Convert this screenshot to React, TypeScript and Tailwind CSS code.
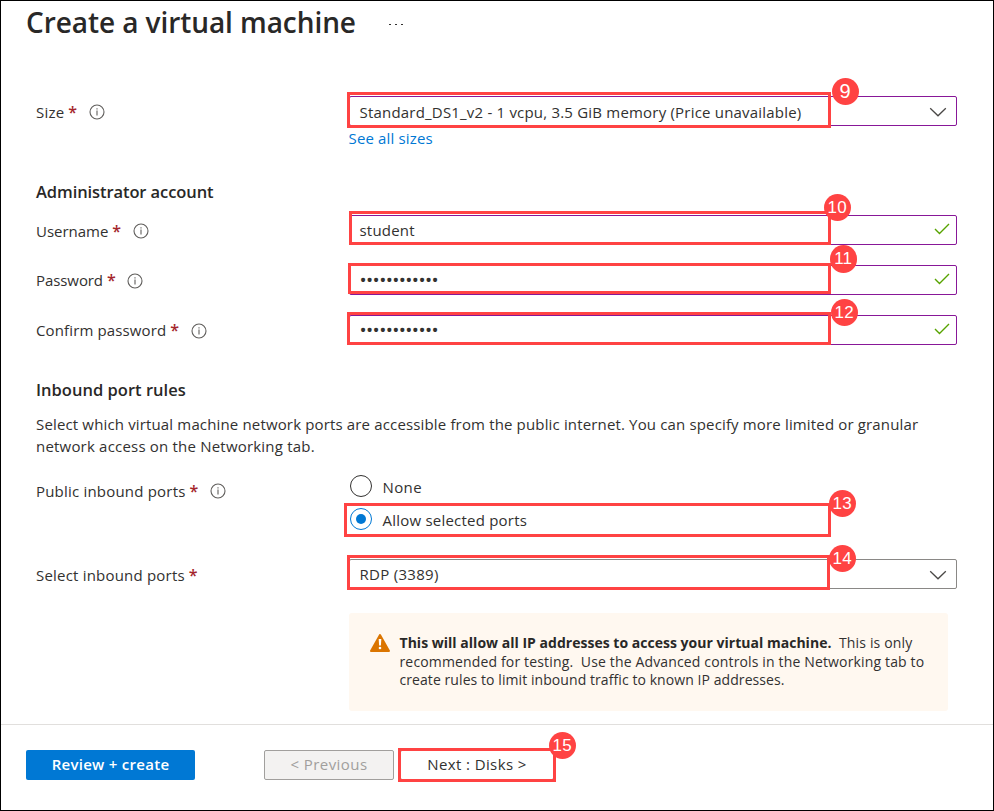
import type { ReactNode } from "react";

function InfoIcon({ className = "" }: { className?: string }) {
  return (
    <svg className={`h-4 w-4 shrink-0 ${className}`} viewBox="0 0 16 16" fill="none" stroke="#605e5c">
      <circle cx="8" cy="8" r="7" strokeWidth="1.1" />
      <path d="M8 6.6V11.6M8 4.3V5.5" strokeWidth="1.1" />
    </svg>
  );
}

function Chevron() {
  return (
    <svg className="mt-px mr-[9px] h-[10px] w-[18px] shrink-0" viewBox="0 0 18 10" fill="none" stroke="#4a4846">
      <path d="M1.2 1.2L9 8.8L16.8 1.2" strokeWidth="1.3" />
    </svg>
  );
}

function Check() {
  return (
    <svg className="mr-[6px] mb-[2px] h-3 w-4 shrink-0" viewBox="0 0 16 12" fill="none" stroke="#57a300">
      <path d="M1 6L5.5 10.5L15 1" strokeWidth="1.4" />
    </svg>
  );
}

function Badge({ n, className }: { n: number; className: string }) {
  return (
    <div
      className={`absolute z-10 flex h-[27.5px] w-[27.5px] items-center justify-center rounded-full bg-[#ff4343] font-['Liberation_Sans',sans-serif] leading-none text-white ${
        n < 10 ? "text-[20px]" : "text-[17px]"
      } ${className}`}
    >
      {n}
    </div>
  );
}

function Outline({ className }: { className: string }) {
  return <div className={`absolute border-3 border-[#ff4343] ${className}`} />;
}

function Label({ text, info = true, className = "" }: { text: string; info?: boolean; className?: string }) {
  return (
    <div className="flex w-[313px] shrink-0 items-center pt-[2px]">
      <span className={className}>{text}</span>
      <span className={`ml-1 text-[16px] font-semibold tracking-normal text-[#a4262c] ${className}`}>*</span>
      {info && <InfoIcon className="ml-[11.5px]" />}
    </div>
  );
}

function Field({
  children,
  icon,
  border = "border-[#881798]",
  overlay,
}: {
  children: ReactNode;
  icon: ReactNode;
  border?: string;
  overlay: ReactNode;
}) {
  return (
    <div className="relative h-[30px] w-[608px]">
      <div className={`flex h-full items-center justify-between rounded-[2px] border pl-[9.5px] ${border}`}>
        {children}
        {icon}
      </div>
      {overlay}
    </div>
  );
}

const dots = "••••••••••••";

export default function App() {
  return (
    <div className="flex h-[811px] w-[994px] flex-col border border-black bg-white font-['Open_Sans',sans-serif] text-[15px] leading-[22px] tracking-[0.2px] text-[#323130]">
      <header className="flex h-[42px] items-center pl-[25px]">
        <h1 className="w-[363px] text-[28px] leading-[40px] font-semibold tracking-[-0.07px] text-[#292827]">
          Create a virtual machine
        </h1>
        <div className="mt-[5px] flex gap-[4.5px]">
          <i className="h-[1.5px] w-[1.5px] bg-[#323130]" />
          <i className="h-[1.5px] w-[1.5px] bg-[#323130]" />
          <i className="h-[1.5px] w-[1.5px] bg-[#323130]" />
        </div>
      </header>

      <main className="flex h-[681px] flex-col pt-[53px] pl-[35px]">
        <div className="flex h-[30px]">
          <Label text="Size" />
          <Field
            icon={<Chevron />}
            overlay={
              <>
                <Outline className="-top-1 -left-[2px] h-9 w-[484px]" />
                <Badge n={9} className="-top-[18.5px] left-[482.5px]" />
              </>
            }
          >
            <span className="pt-[2px]">Standard_DS1_v2 - 1 vcpu, 3.5 GiB memory (Price unavailable)</span>
          </Field>
        </div>
        <a className="mt-px ml-[312.5px] tracking-[0.15px] text-[#0078d4]">See all sizes</a>

        <h2 className="mt-[31px] h-[24px] text-[16.5px] leading-[24px] font-semibold tracking-[-0.09px] text-[#292827]">
          Administrator account
        </h2>
        <div className="mt-[11px] flex h-[30px]">
          <Label text="Username" className="tracking-[-0.02px]" />
          <Field
            icon={<Check />}
            overlay={
              <>
                <Outline className="-top-1 left-0 h-[34px] w-[482px]" />
                <Badge n={10} className="-top-[21.5px] left-[474.5px]" />
              </>
            }
          >
            <span>student</span>
          </Field>
        </div>
        <div className="mt-5 flex h-[30px]">
          <Label text="Password" className="pb-[2px] tracking-[-0.08px]" />
          <Field
            icon={<Check />}
            overlay={
              <>
                <Outline className="-top-[2px] -left-[1px] h-[31px] w-[483px]" />
                <Badge n={11} className="-top-[20px] left-[480.5px]" />
              </>
            }
          >
            <span className="text-[19px] tracking-[-0.6px]">{dots}</span>
          </Field>
        </div>
        <div className="mt-5 flex h-[30px]">
          <Label text="Confirm password" className="pb-[2px] tracking-[0.13px]" />
          <Field
            icon={<Check />}
            overlay={
              <>
                <Outline className="-top-[3px] -left-[2px] h-[33px] w-[484px]" />
                <Badge n={12} className="-top-[16.5px] left-[481.5px]" />
              </>
            }
          >
            <span className="text-[19px] tracking-[-0.6px]">{dots}</span>
          </Field>
        </div>

        <h2 className="mt-[33px] h-[24px] text-[16.5px] leading-[24px] font-semibold tracking-[0.02px] text-[#292827]">
          Inbound port rules
        </h2>
        <p className="mt-[11px] whitespace-nowrap">
          <span className="tracking-[0.152px]">
            Select which virtual machine network ports are accessible from the public internet. You can specify more
            limited or granular
          </span>
          <br />
          network access on the Networking tab.
        </p>

        <div className="mt-[18px] flex h-[55px] items-start">
          <div className="pt-[3px]">
            <Label text="Public inbound ports" />
          </div>
          <div className="relative">
            <div className="flex h-[22px] items-center">
              <span className="ml-[1px] h-[22px] w-[22px] rounded-full border border-[#323130]" />
              <span className="ml-[10.5px] pt-[2px] tracking-[0.4px]">None</span>
            </div>
            <div className="mt-[11px] flex h-[22px] w-[482px] items-center">
              <span className="ml-[1px] flex h-[22px] w-[22px] items-center justify-center rounded-full border border-[#0078d4]">
                <span className="h-[10px] w-[10px] rounded-full bg-[#0078d4]" />
              </span>
              <span className="ml-[10.5px] pt-[2px] tracking-[0.22px]">Allow selected ports</span>
            </div>
            <Outline className="top-[28px] -left-[5px] h-[34px] w-[487px]" />
            <Badge n={13} className="top-[14.5px] left-[479.5px]" />
          </div>
        </div>

        <div className="mt-[29px] flex h-[30px]">
          <Label text="Select inbound ports" info={false} />
          <Field
            icon={<Chevron />}
            border="border-[#8a8886]"
            overlay={
              <>
                <Outline className="-top-1 -left-[2px] h-[35px] w-[483px]" />
                <Badge n={14} className="-top-[14.5px] left-[479.5px]" />
              </>
            }
          >
            <span className="tracking-[0.3px]">RDP (3389)</span>
          </Field>
        </div>

        <div className="mt-6 ml-[313px] flex h-[98px] w-[599px] rounded-[3px] bg-[#fff8f0] pt-[21px] pl-[21px]">
          <svg className="h-[18px] w-5 shrink-0" viewBox="0 0 20 18">
            <path d="M10 1L19 17H1Z" fill="#db7500" stroke="#db7500" strokeWidth="2" strokeLinejoin="round" />
            <path d="M8.7 5h2.6l-.4 6.6H9.1Z" fill="#fff" />
            <circle cx="10" cy="14" r="1.3" fill="#fff" />
          </svg>
          <p className="ml-[9.5px] text-[14px] leading-[18.6px] tracking-[0.15px] whitespace-pre">
            <b className="font-bold tracking-[0.02px] text-[#292827]">
              This will allow all IP addresses to access your virtual machine.
            </b>
            {"  This is only\nrecommended for testing.  Use the Advanced controls in the Networking tab to\n"}
            <span className="tracking-[0.074px]">create rules to limit inbound traffic to known IP addresses.</span>
          </p>
        </div>
      </main>

      <footer className="flex h-[86px] items-start border-t border-[#e1dfdd] pt-[25px] pl-[25px]">
        <button className="h-[30px] w-[169px] rounded-[2px] bg-[#0078d4] pb-[2px] font-semibold tracking-[0.28px] text-white">
          Review + create
        </button>
        <button className="ml-[69px] h-[30px] w-[130px] rounded-[2px] border border-[#a19f9d] bg-[#f3f2f1] pb-[2px] font-medium tracking-[0.42px] text-[#a19f9d]">
          &lt; Previous
        </button>
        <div className="relative ml-[6px]">
          <button className="h-[30px] w-[154px] rounded-[2px] border border-[#8a8886] pb-[2px] font-medium tracking-[0.4px]">
            Next : Disks &gt;
          </button>
          <Outline className="-top-[2px] -left-[2px] h-[34px] w-[158px]" />
          <Badge n={15} className="-top-[18.5px] left-[148.5px]" />
        </div>
      </footer>
    </div>
  );
}
